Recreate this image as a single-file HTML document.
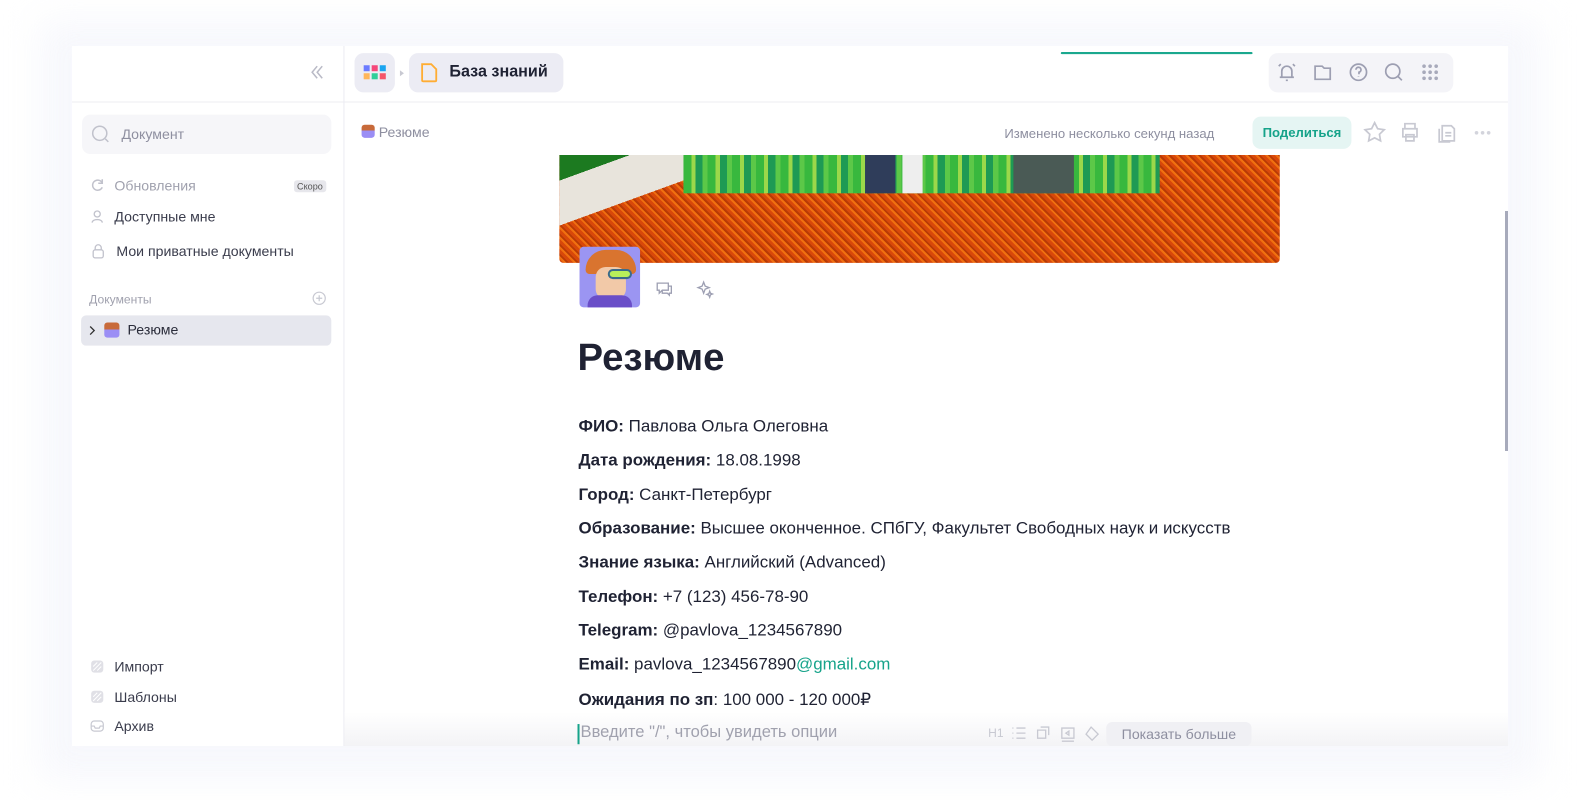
<!DOCTYPE html>
<html><head><meta charset="utf-8"><style>
*{box-sizing:border-box;margin:0;padding:0}
body{width:1580px;height:800px;background:#fff;font-family:"Liberation Sans","Noto Sans CJK SC",sans-serif;position:relative;overflow:hidden;color:#1f2233}
.bg{position:absolute;left:40px;top:20px;width:1500px;height:760px;background:#f6f7fc;filter:blur(18px);opacity:.9}
.card{position:absolute;left:72px;top:46px;width:1436px;height:700px;background:#fff;overflow:hidden}
.wrap{position:absolute;left:0;top:0;width:1436px;height:700px;transform:scale(1.009);transform-origin:0 0}
.side{position:absolute;left:0;top:0;width:270px;height:700px;border-right:1px solid #ececf2}
.hdr{position:absolute;left:0;top:0;width:1436px;height:56px;border-bottom:1px solid #ececf2}
.abs{position:absolute}
.item{position:absolute;left:18px;font-size:14px;color:#3a3c4c;display:flex;align-items:center}
.item svg{margin-right:10px}
.p{position:absolute;left:502px;font-size:16.8px;color:#1f2233;white-space:nowrap}
.p b{font-weight:700}
</style></head><body>
<div class="bg"></div>
<div class="card">
<div class="wrap">
<div class="hdr"></div>
<div class="side">
 <svg class="abs" style="left:236px;top:18px" width="14" height="16" viewBox="0 0 14 16"><path d="M7 2L2 8l5 6M12 2L7 8l5 6" fill="none" stroke="#b9bac6" stroke-width="1.5"/></svg>
 <div class="abs" style="left:10px;top:68px;width:247px;height:39px;background:#f6f6f9;border-radius:8px"></div>
 <svg class="abs" style="left:19px;top:78px" width="19" height="19"><circle cx="8.5" cy="8.5" r="7" fill="none" stroke="#c1c2cc" stroke-width="1.5"/><path d="M14 14l3 3" stroke="#c1c2cc" stroke-width="1.5"/></svg>
 <div class="abs" style="left:49px;top:79px;font-size:14px;color:#8e8fa0">Документ</div>
 <div class="item" style="top:130px;color:#a0a1ae"><svg width="14" height="14"><path d="M11.5 4A5 5 0 1 0 12 9" fill="none" stroke="#c1c2cc" stroke-width="1.5"/><path d="M12 1v4H8" fill="none" stroke="#c1c2cc" stroke-width="1.5"/></svg>Обновления</div>
 <div class="abs" style="left:220px;top:133px;font-size:9px;background:#e7e7ec;color:#555;border-radius:3px;padding:1px 3px">Скоро</div>
 <div class="item" style="top:161px"><svg width="14" height="14"><circle cx="7" cy="4.5" r="3" fill="none" stroke="#c1c2cc" stroke-width="1.3"/><path d="M2 13c0-4 10-4 10 0" fill="none" stroke="#c1c2cc" stroke-width="1.3"/></svg>Доступные мне</div>
 <div class="item" style="top:195px"><svg width="16" height="16"><rect x="3" y="7" width="10" height="8" rx="2" fill="none" stroke="#c1c2cc" stroke-width="1.3"/><path d="M5 7V5a3 3 0 0 1 6 0v2" fill="none" stroke="#c1c2cc" stroke-width="1.3"/></svg>Мои приватные документы</div>
 <div class="abs" style="left:17px;top:244px;font-size:12px;color:#a0a1ae">Документы</div>
 <svg class="abs" style="left:238px;top:243px" width="14" height="14"><circle cx="7" cy="7" r="6" fill="none" stroke="#c8c9d2" stroke-width="1.2"/><path d="M7 4v6M4 7h6" stroke="#c8c9d2" stroke-width="1.2"/></svg>
 <div class="abs" style="left:9px;top:267px;width:248px;height:30px;background:#e6e7ee;border-radius:5px"></div>
 <svg class="abs" style="left:16px;top:276px" width="8" height="12"><path d="M2 2l4 4-4 4" fill="none" stroke="#333" stroke-width="1.3"/></svg>
 <div class="abs" style="left:32px;top:274px;width:15px;height:15px;border-radius:3px;background:linear-gradient(#c86a3a 45%,#9b8ef5 45%)"></div>
 <div class="abs" style="left:55px;top:273px;font-size:14px;color:#2a2c3a">Резюме</div>
 <div class="item" style="top:607px"><svg width="14" height="14"><rect x="1" y="1" width="12" height="12" rx="3" fill="#e0e0e6"/><path d="M3 11L11 3M3 7l4-4M7 11l4-4" stroke="#fff"/></svg>Импорт</div>
 <div class="item" style="top:637px"><svg width="14" height="14"><rect x="1" y="1" width="12" height="12" rx="3" fill="#e0e0e6"/><path d="M3 11L11 3M3 7l4-4M7 11l4-4" stroke="#fff"/></svg>Шаблоны</div>
 <div class="item" style="top:666px"><svg width="14" height="14"><rect x="1" y="2" width="12" height="10" rx="3" fill="none" stroke="#c8c9d2" stroke-width="1.2"/><path d="M1 7h3l1 2h4l1-2h3" fill="none" stroke="#c8c9d2" stroke-width="1.2"/></svg>Архив</div>
</div>
<div class="abs" style="left:280px;top:7px;width:40px;height:39px;background:#ececf4;border-radius:9px"></div>
<svg class="abs" style="left:289px;top:19px" width="23" height="15"><rect x="0" y="0" width="6" height="6" fill="#6b7bff"/><rect x="8" y="0" width="6" height="6" fill="#f5477a"/><rect x="16" y="0" width="6" height="6" fill="#1aa5f0"/><rect x="0" y="8" width="6" height="6" fill="#ffb65a"/><rect x="8" y="8" width="6" height="6" fill="#2fcf9a"/><rect x="16" y="8" width="6" height="6" fill="#f5566a"/></svg>
<svg class="abs" style="left:324px;top:23px" width="6" height="8"><path d="M1 1l4 3-4 3z" fill="#c8c9d2"/></svg>
<div class="abs" style="left:334px;top:7px;width:153px;height:39px;background:#ececf4;border-radius:9px"></div>
<svg class="abs" style="left:345px;top:16px" width="18" height="21"><path d="M2 2h9l5 5v11a1 1 0 0 1-1 1H3a1 1 0 0 1-1-1z" fill="none" stroke="#ffad33" stroke-width="1.8"/></svg>
<div class="abs" style="left:374px;top:17px;font-size:16px;font-weight:700;color:#1f2233">База знаний</div>
<div class="abs" style="left:980px;top:6px;width:190px;height:2px;background:#1aa88e;border-radius:2px"></div>
<div class="abs" style="left:1186px;top:7px;width:183px;height:39px;background:#f4f4f8;border-radius:9px"></div>
<svg class="abs" style="left:1193px;top:14px" width="176" height="24" fill="none" stroke="#9d9fb2" stroke-width="1.7">
<path d="M4 17h14M6 17v-6a5 5 0 0 1 10 0v6M10 20h2M3 6l2-2M19 6l-2-2"/>
<path d="M39 6h7l2 2h6v11H39z"/>
<circle cx="82" cy="12" r="8"/><path d="M79.5 9.5a2.5 2.5 0 1 1 3 2.5v2M82 16v.5"/>
<circle cx="116" cy="11" r="7"/><path d="M121 16l4 4"/>
<g fill="#a8aabb" stroke="none"><circle cx="147" cy="6" r="1.8"/><circle cx="153" cy="6" r="1.8"/><circle cx="159" cy="6" r="1.8"/><circle cx="147" cy="12" r="1.8"/><circle cx="153" cy="12" r="1.8"/><circle cx="159" cy="12" r="1.8"/><circle cx="147" cy="18" r="1.8"/><circle cx="153" cy="18" r="1.8"/><circle cx="159" cy="18" r="1.8"/></g>
</svg>
<div class="abs" style="left:287px;top:78px;width:13px;height:13px;border-radius:3px;background:linear-gradient(#c86a3a 45%,#9b8ef5 45%)"></div>
<div class="abs" style="left:304px;top:77px;font-size:14px;color:#8e8fa0">Резюме</div>
<div class="abs" style="left:924px;top:79px;font-size:13px;color:#8e8fa0">Изменено несколько секунд назад</div>
<div class="abs" style="left:1170px;top:70px;width:98px;height:32px;background:#e5f5f3;border-radius:8px;font-size:13px;font-weight:700;color:#16a38a;text-align:center;line-height:32px">Поделиться</div>
<svg class="abs" style="left:1280px;top:74px" width="140" height="24" fill="none" stroke="#c8c9d2" stroke-width="1.7">
<path d="M11 2l3 6 6.5 1-4.7 4.5 1.1 6.5L11 17l-5.9 3 1.1-6.5L1.5 9 8 8z"/>
<path d="M41 8V3h10v5M39 8h14v8H39zM42 14h8v6h-8z"/>
<path d="M78 5h9l3 3v12H78zM75 8v13h11M81 12h6M81 15h6"/>
<g fill="#d3d4dc" stroke="none"><circle cx="112" cy="12" r="1.8"/><circle cx="118" cy="12" r="1.8"/><circle cx="124" cy="12" r="1.8"/></g>
</svg>
<div class="abs" style="left:483px;top:108px;width:714px;height:107px;border-radius:0 0 4px 4px;background:repeating-linear-gradient(45deg,#d8480a 0 3px,#f07010 3px 5px,#b83a05 5px 7px);overflow:hidden">
 <div class="abs" style="left:0;top:0;width:130px;height:80px;background:linear-gradient(160deg,#1c7a20 0 20%,#e8e4dc 20% 55%,transparent 55%)"></div>
 <div class="abs" style="left:123px;top:0;width:472px;height:38px;background:repeating-linear-gradient(90deg,#38b83e 0 8px,#9bd84a 8px 12px,#1e9a54 12px 19px,#5cc848 19px 24px)"></div>
 <div class="abs" style="left:303px;top:0;width:30px;height:38px;background:#2f3d5a"></div>
 <div class="abs" style="left:340px;top:0;width:20px;height:38px;background:#eee"></div>
 <div class="abs" style="left:450px;top:0;width:60px;height:38px;background:#4a5a55"></div>
</div>
<div class="abs" style="left:503px;top:199px;width:60px;height:60px;border-radius:4px;background:#9b95f2;overflow:hidden">
 <div class="abs" style="left:6px;top:3px;width:50px;height:24px;background:#d9742f;border-radius:20px 20px 4px 4px"></div>
 <div class="abs" style="left:16px;top:20px;width:30px;height:32px;background:#f2c9a8;border-radius:10px"></div>
 <div class="abs" style="left:28px;top:22px;width:24px;height:10px;background:#b8f05a;border-radius:5px;border:2px solid #3a6b8a"></div>
 <div class="abs" style="left:8px;top:48px;width:44px;height:14px;background:#6a4ec8;border-radius:10px 10px 0 0"></div>
</div>
<svg class="abs" style="left:578px;top:232px" width="60" height="20" fill="none" stroke="#9d9fb2" stroke-width="1.3"><path d="M2 3h11v7H7l-3 3v-3H2zM13 6h3v7h-2v2l-2-2H7v-3"/><path d="M48 2l1.5 4 4 1.5-4 1.5L48 13l-1.5-4-4-1.5 4-1.5zM54 11l.8 2 2 .8-2 .8L54 17l-.8-2-2-.8 2-.8z"/></svg>
<div class="abs" style="left:501px;top:288px;font-size:38px;font-weight:700;color:#1f2233">Резюме</div>
<div class="p" style="top:367px"><b>ФИО:</b> Павлова Ольга Олеговна</div>
<div class="p" style="top:401px"><b>Дата рождения:</b> 18.08.1998</div>
<div class="p" style="top:435px"><b>Город:</b> Санкт-Петербург</div>
<div class="p" style="top:468px"><b>Образование:</b> Высшее оконченное. СПбГУ, Факультет Свободных наук и искусств</div>
<div class="p" style="top:502px"><b>Знание языка:</b> Английский (Advanced)</div>
<div class="p" style="top:536px"><b>Телефон:</b> +7 (123) 456-78-90</div>
<div class="p" style="top:569px"><b>Telegram:</b> @pavlova_1234567890</div>
<div class="p" style="top:603px"><b>Email:</b> pavlova_1234567890<span style="color:#16a38a">@gmail.com</span></div>
<div class="p" style="top:637px"><b>Ожидания по зп</b>: 100 000 - 120 000₽</div>
<div class="abs" style="left:270px;top:660px;width:1166px;height:40px;background:linear-gradient(#fff,#f1f1f4)"></div>
<div class="abs" style="left:501px;top:672px;width:2px;height:20px;background:#16a38a"></div>
<div class="p" style="top:671px;left:504px;color:#a0a1ae;font-size:16.4px">Введите "/", чтобы увидеть опции</div>
<div class="abs" style="left:908px;top:674px;font-size:12px;color:#c8c9d2">H1</div>
<svg class="abs" style="left:930px;top:672px" width="95" height="20" fill="none" stroke="#c8c9d2" stroke-width="1.3"><path d="M2 4h1M6 4h9M2 9h1M6 9h9M2 14h1M6 14h9"/><path d="M27 6h8v8h-8zM30 3h8v8"/><path d="M51 4h12v10H51zM55 9l3-2v4z M51 17h12"/><path d="M80 3l7 7-6 6-6-6z"/></svg>
<div class="abs" style="left:1025px;top:670px;width:144px;height:24px;background:#f0f0f4;border-radius:6px;font-size:14px;color:#8e8fa0;text-align:center;line-height:24px">Показать больше</div>
</div>
<div class="abs" style="left:1433px;top:165px;width:3px;height:240px;background:#a7aabb"></div>
</div>
</body></html>
